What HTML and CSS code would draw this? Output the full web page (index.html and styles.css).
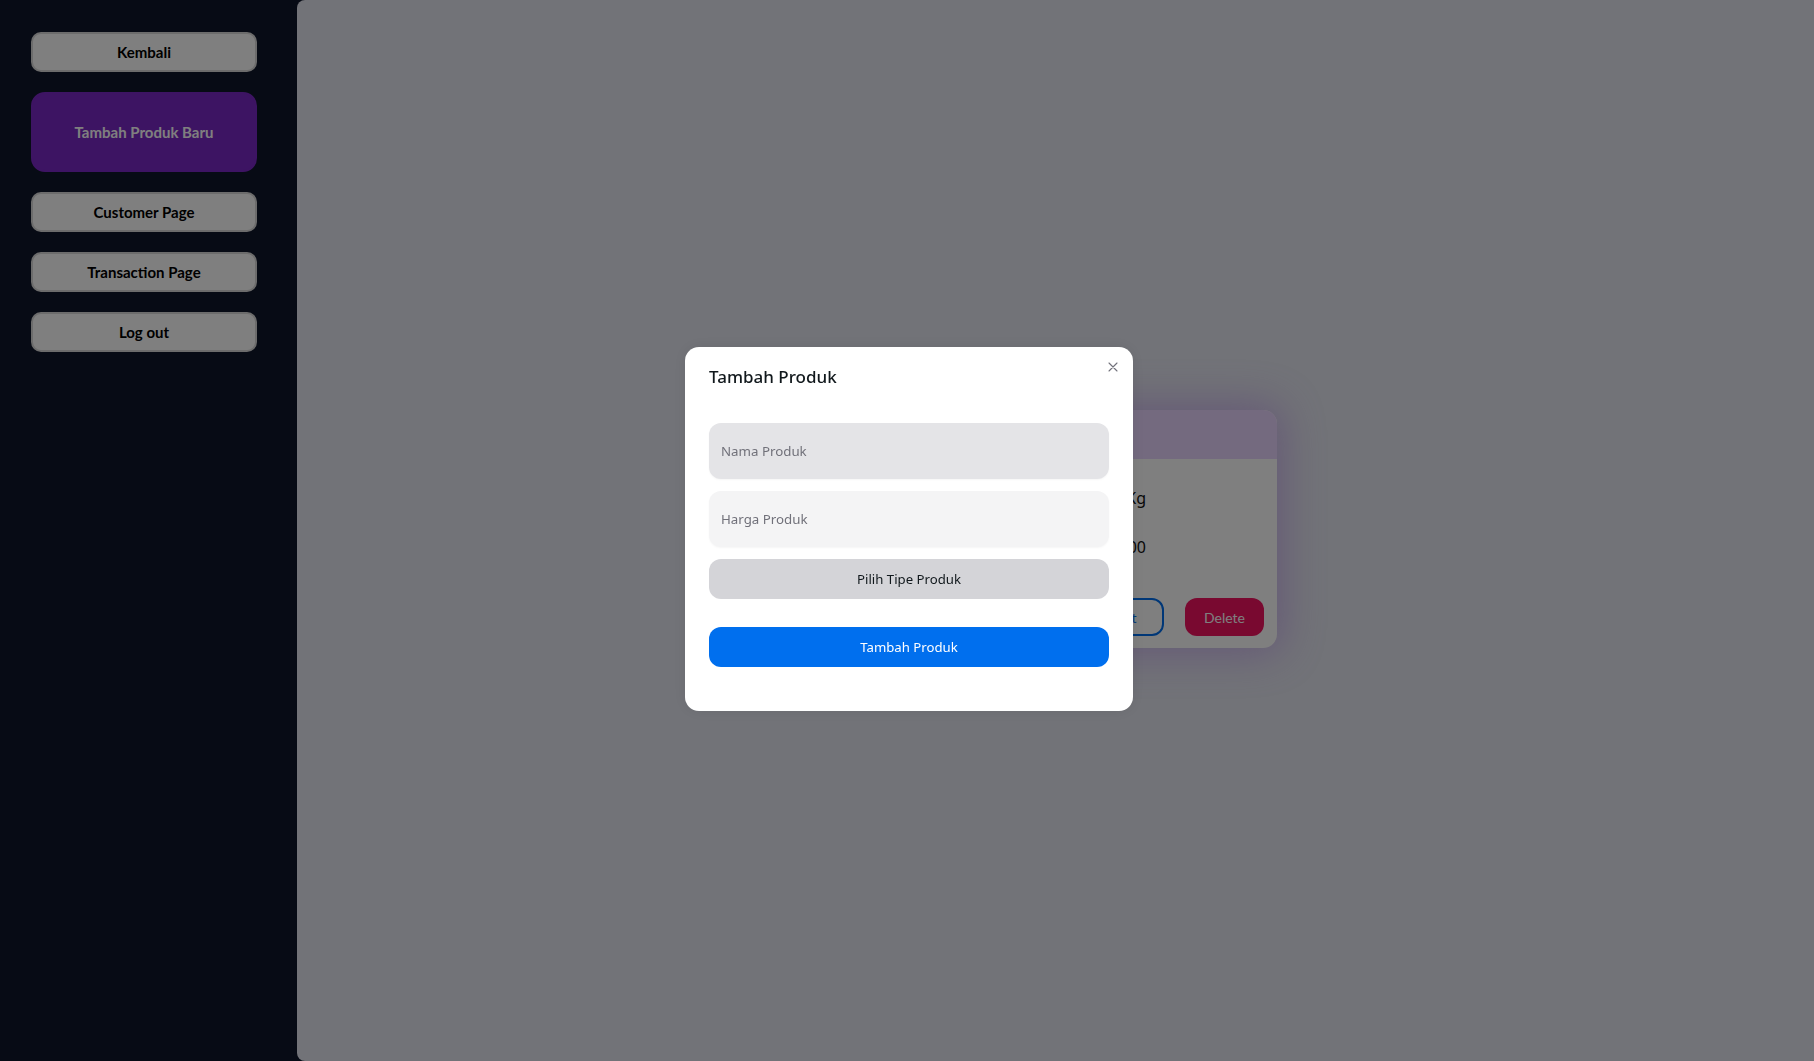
FILE: index.html
```html
<!DOCTYPE html>
<html lang="id">
<head>
<meta charset="utf-8">
<title>Produk</title>
<link rel="stylesheet" href="styles.css">
</head>
<body>
<div class="layout">
  <aside class="sidebar">
    <button class="side-btn">Kembali</button>
    <button class="side-btn side-btn-active">Tambah Produk Baru</button>
    <button class="side-btn">Customer Page</button>
    <button class="side-btn">Transaction Page</button>
    <button class="side-btn">Log out</button>
  </aside>
  <main class="main">
    <div class="card">
      <div class="card-header">Beras Premium</div>
      <div class="card-body">
        <p class="card-line"><span>Berat</span><span>25 Kg</span></p>
        <p class="card-line"><span>Harga</span><span>Rp 150.000</span></p>
      </div>
      <div class="card-actions">
        <button class="btn-edit">Edit</button>
        <button class="btn-delete">Delete</button>
      </div>
    </div>
  </main>
</div>

<div class="backdrop"></div>
<div class="modal-wrap">
  <section class="modal">
    <button class="modal-close" aria-label="Close">
      <svg viewBox="0 0 24 24" width="16" height="16" fill="none" stroke="currentColor" stroke-width="1.6" stroke-linecap="round"><path d="M18 6L6 18M6 6l12 12"/></svg>
    </button>
    <header class="modal-header">Tambah Produk</header>
    <div class="modal-body">
      <input class="field field-hover" type="text" placeholder="Nama Produk">
      <input class="field" type="text" placeholder="Harga Produk">
      <button class="btn-select">Pilih Tipe Produk</button>
    </div>
    <footer class="modal-footer">
      <button class="btn-primary">Tambah Produk</button>
    </footer>
  </section>
</div>
</body>
</html>
```

FILE: styles.css
```css
* { box-sizing: border-box; }
html, body { margin: 0; height: 100%; }
body {
  font-family: "Noto Sans", "Open Sans", sans-serif;
  background: #0f172a;
  color: #11181c;
}
button { font-family: inherit; cursor: pointer; }

.layout {
  display: flex;
  height: 100vh;
}
.sidebar {
  width: 297px;
  flex: none;
  background: #0f172a;
  padding: 32px 0 0 31px;
  display: flex;
  flex-direction: column;
  gap: 20px;
}
.side-btn {
  width: 226px;
  height: 40px;
  background: #ffffff;
  border: 2px solid #d8d8d8;
  border-radius: 10px;
  font-family: Lato, "Liberation Sans", sans-serif;
  font-weight: 700;
  font-size: 15px;
  color: #000;
}
.side-btn-active {
  height: 80px;
  background: #7b28c6;
  border-color: #7b28c6;
  color: #ffffff;
  border-radius: 14px;
}

.main {
  flex: 1;
  background: #e4e6f0;
  border-radius: 8px 0 0 8px;
  display: flex;
  align-items: center;
  justify-content: center;
}
.card {
  width: 443px;
  height: 238px;
  margin-bottom: 3px;
  background: #ffffff;
  border-radius: 14px;
  overflow: hidden;
  box-shadow: 0 0 40px 6px rgba(155, 80, 230, 0.35);
  display: flex;
  flex-direction: column;
}
.card-header {
  height: 49px;
  flex: none;
  background: #e8d5fe;
  padding: 12px 20px;
  font-size: 17px;
  font-weight: 600;
}
.card-body {
  padding: 27px 20px 0;
  flex: 1;
}
.card-line {
  margin: 0 0 25px;
  width: 292px;
  display: flex;
  justify-content: space-between;
  font-size: 16px;
  line-height: 24px;
  color: #111;
}
.card-actions {
  display: flex;
  justify-content: flex-end;
  gap: 21px;
  padding: 0 13px 12px;
}
.btn-edit, .btn-delete {
  width: 79px;
  height: 38px;
  border-radius: 12px;
  font-family: Lato, "Liberation Sans", sans-serif;
  font-size: 14px;
}
.btn-edit {
  background: transparent;
  border: 2px solid #006fee;
  color: #006fee;
}
.btn-delete {
  background: #f31260;
  border: none;
  color: #ffffff;
}

.backdrop {
  position: fixed;
  inset: 0;
  background: rgba(0, 0, 0, 0.5);
}
.modal-wrap {
  position: fixed;
  inset: 0;
  display: flex;
  align-items: center;
  justify-content: center;
  padding: 0 0 3px 4px;
}
.modal {
  position: relative;
  width: 448px;
  height: 364px;
  background: #ffffff;
  border-radius: 14px;
  box-shadow: 0 0 15px rgba(0,0,0,0.08);
  display: flex;
  flex-direction: column;
}
.modal-close {
  position: absolute;
  top: 4px;
  right: 4px;
  padding: 8px;
  border: none;
  background: transparent;
  color: #71717a;
  border-radius: 50%;
  line-height: 0;
}
.modal-header {
  padding: 16px 24px;
  font-size: 17px;
  line-height: 28px;
  font-weight: 500;
  color: #11181c;
}
.modal-body {
  padding: 16px 24px 0;
  display: flex;
  flex-direction: column;
  gap: 12px;
}
.field {
  height: 56px;
  border: none;
  border-radius: 12px;
  background: #f4f4f5;
  padding: 0 12px;
  font-family: inherit;
  font-size: 13.3px;
  color: #11181c;
  outline: none;
  box-shadow: 0 1px 2px rgba(0,0,0,0.04);
}
.field::placeholder { color: #71717a; }
.field-hover { background: #e4e4e7; }
.btn-select {
  height: 40px;
  border: none;
  border-radius: 12px;
  background: #d4d4d8;
  font-size: 13.2px;
  color: #11181c;
}
.modal-footer {
  padding: 28px 24px 0;
}
.btn-primary {
  width: 100%;
  height: 40px;
  border: none;
  border-radius: 12px;
  background: #006fee;
  color: #ffffff;
  font-size: 13.2px;
}
```
